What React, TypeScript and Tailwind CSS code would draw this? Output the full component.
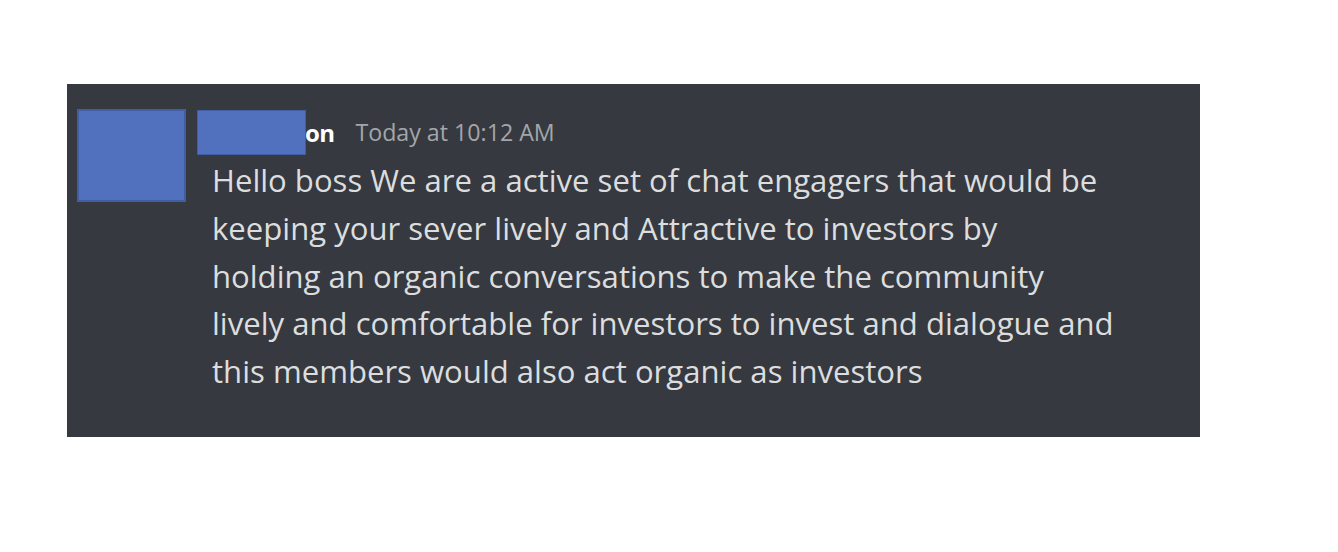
import React from "react";

const lines = [
  "Hello boss We are a active set of chat engagers that would be",
  "keeping your sever lively and Attractive to investors by",
  "holding an organic conversations to make the community",
  "lively and comfortable for investors to invest and dialogue and",
  "this members would also act organic as investors",
];

const Message = () => {
  return (
    <div className="ml-[67px] mt-[84px] h-[353px] w-[1133px] bg-[#36393f] pl-[10px] pt-[25px]">
      <div className="flex">
        <div className="h-[93px] w-[109px] shrink-0 border-2 border-[#3f5ea3] bg-[#5171bf]" />
        <div className="ml-[26px] flex flex-col">
          <div className="relative flex h-[48px] items-center">
            {/* redacted username */}
            <div className="absolute left-[-15px] top-[1px] h-[45px] w-[109px] border border-[#3f5ea3] bg-[#5171bf]" />
            <span className="pl-[93px] text-[24px] font-bold leading-none tracking-[-0.6px] text-white">
              on
            </span>
            <span className="ml-[21px] text-[23.2px] leading-none text-[#a3a6aa]">
              Today at 10:12 AM
            </span>
          </div>
          <div className="text-[31.1px] leading-[47.8px] text-[#dcddde]">
            {lines.map((l) => (
              <div key={l} className="whitespace-nowrap">
                {l}
              </div>
            ))}
          </div>
        </div>
      </div>
    </div>
  );
};

export default function App() {
  return (
    <div
      className="flex h-[552px] w-[1338px] flex-col overflow-hidden bg-white"
      style={{ fontFamily: '"Open Sans", "Noto Sans", sans-serif' }}
    >
      <Message />
    </div>
  );
}
